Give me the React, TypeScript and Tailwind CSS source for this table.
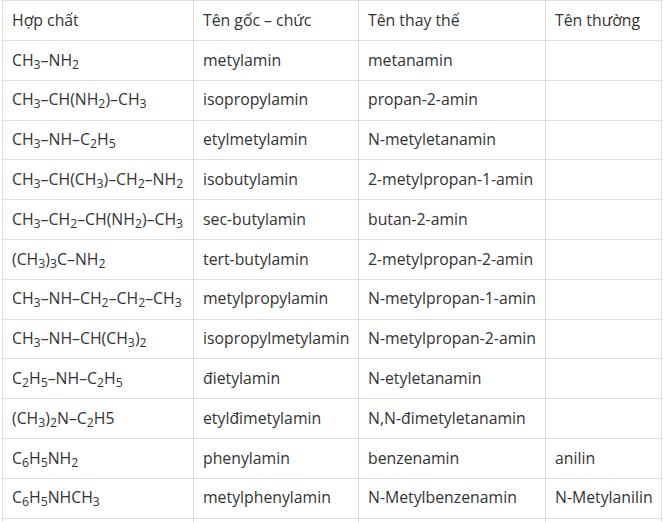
const S = ({ children }: { children: React.ReactNode }) => <sub className="text-[78%]">{children}</sub>

type Row = [React.ReactNode, string, string, string]

const rows: Row[] = [
  [<>CH<S>3</S>–NH<S>2</S></>, "metylamin", "metanamin", ""],
  [<>CH<S>3</S>–CH(NH<S>2</S>)–CH<S>3</S></>, "isopropylamin", "propan-2-amin", ""],
  [<>CH<S>3</S>–NH–C<S>2</S>H<S>5</S></>, "etylmetylamin", "N-metyletanamin", ""],
  [<>CH<S>3</S>–CH(CH<S>3</S>)–CH<S>2</S>–NH<S>2</S></>, "isobutylamin", "2-metylpropan-1-amin", ""],
  [<>CH<S>3</S>–CH<S>2</S>–CH(NH<S>2</S>)–CH<S>3</S></>, "sec-butylamin", "butan-2-amin", ""],
  [<>(CH<S>3</S>)<S>3</S>C–NH<S>2</S></>, "tert-butylamin", "2-metylpropan-2-amin", ""],
  [<>CH<S>3</S>–NH–CH<S>2</S>–CH<S>2</S>–CH<S>3</S></>, "metylpropylamin", "N-metylpropan-1-amin", ""],
  [<>CH<S>3</S>–NH–CH(CH<S>3</S>)<S>2</S></>, "isopropylmetylamin", "N-metylpropan-2-amin", ""],
  [<>C<S>2</S>H<S>5</S>–NH–C<S>2</S>H<S>5</S></>, "đietylamin", "N-etyletanamin", ""],
  [<>(CH<S>3</S>)<S>2</S>N–C<S>2</S>H5</>, "etylđimetylamin", "N,N-đimetyletanamin", ""],
  [<>C<S>6</S>H<S>5</S>NH<S>2</S></>, "phenylamin", "benzenamin", "anilin"],
  [<>C<S>6</S>H<S>5</S>NHCH<S>3</S></>, "metylphenylamin", "N-Metylbenzenamin", "N-Metylanilin"],
  ["", "", "", ""],
]

const cell = "border border-[#dddddd] px-[9px] text-left font-normal align-middle whitespace-nowrap"

export default function App() {
  return (
    <div className="w-[668px] h-[522px] overflow-hidden bg-white">
      <table
        className="ml-[2px] table-fixed border-collapse text-[15.8px] text-[#333333] w-[659px]"
        style={{ fontFamily: '"Open Sans", "Noto Sans", sans-serif' }}
      >
        <colgroup>
          <col className="w-[191px]" />
          <col className="w-[165px]" />
          <col className="w-[187px]" />
          <col className="w-[116px]" />
        </colgroup>
        <thead>
          <tr className="h-[40px]">
            <th className={cell}>Hợp chất</th>
            <th className={cell}>Tên gốc – chức</th>
            <th className={cell}>Tên thay thế</th>
            <th className={cell}>Tên thường</th>
          </tr>
        </thead>
        <tbody>
          {rows.map((r, i) => (
            <tr key={i} className="h-[39.8px]">
              {r.map((c, j) => (
                <td key={j} className={cell}>
                  {c}
                </td>
              ))}
            </tr>
          ))}
        </tbody>
      </table>
    </div>
  )
}
